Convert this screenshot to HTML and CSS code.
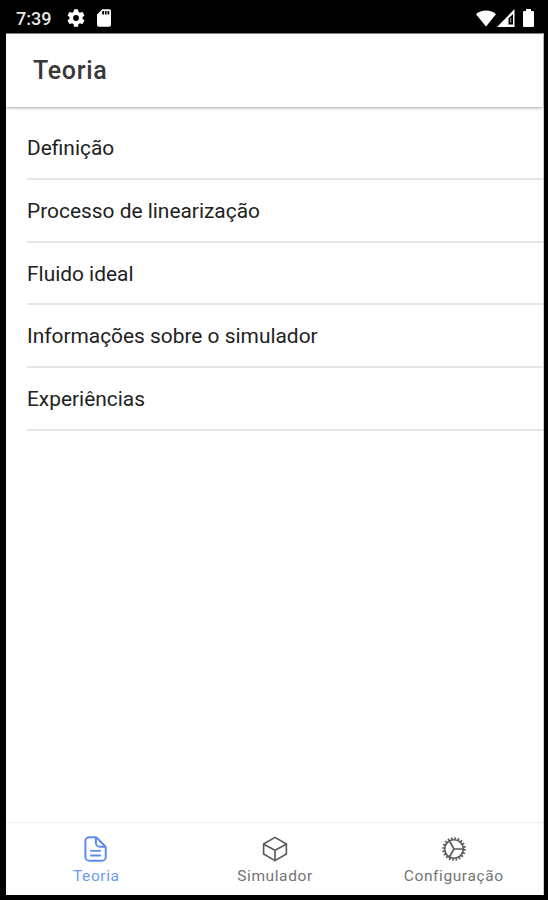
FILE: index.html
```html
<!DOCTYPE html>
<html lang="pt">
	<head>
		<meta charset="UTF-8">
		<meta name="viewport" content="width=device-width, initial-scale=1.0">
		<title>Teoria</title>
		<link rel="stylesheet" href="styles.css">
	</head>
	<body>
		<div class="status">
			<span class="time">7:39</span>
			<svg class="gear" viewBox="2 2 20 20" width="18" height="18"><path fill="#fff" d="M19.14 12.94c.04-.3.06-.61.06-.94s-.02-.64-.07-.94l2.03-1.58a.49.49 0 0 0 .12-.61l-1.92-3.32a.49.49 0 0 0-.59-.22l-2.39.96a7 7 0 0 0-1.62-.94l-.36-2.54a.48.48 0 0 0-.48-.41h-3.84a.48.48 0 0 0-.47.41l-.36 2.54c-.59.24-1.13.57-1.62.94l-2.39-.96a.48.48 0 0 0-.59.22L2.74 8.87a.47.47 0 0 0 .12.61l2.03 1.58c-.05.3-.09.63-.09.94s.02.64.07.94l-2.03 1.58a.49.49 0 0 0-.12.61l1.92 3.32c.12.22.37.29.59.22l2.39-.96c.5.38 1.03.7 1.62.94l.36 2.54c.05.24.24.41.48.41h3.84c.24 0 .44-.17.47-.41l.36-2.54a7 7 0 0 0 1.62-.94l2.39.96c.22.08.47 0 .59-.22l1.92-3.32a.47.47 0 0 0-.12-.61zM12 15.2a3.2 3.2 0 1 1 0-6.4 3.2 3.2 0 0 1 0 6.4z"/></svg>
			<svg class="card" viewBox="4 2 16 20" width="14" height="18"><path fill="#fff" d="M18 2h-8L4.02 8 4 20a2 2 0 0 0 2 2h12a2 2 0 0 0 2-2V4a2 2 0 0 0-2-2zm-6 6h-2V4h2zm3 0h-2V4h2zm3 0h-2V4h2z"/></svg>
			<div class="signals">
				<svg width="20" height="17" viewBox="0 0 20 17"><path fill="#fff" d="M0 4.2Q4 .5 10 .5t10 3.7L10 16.5z"/></svg>
				<svg width="18" height="18" viewBox="0 0 18 18"><path fill="#fff" d="M17.5 0v18H0z"/><path d="M16 5v10.5h-4.5V9.500z"/><path fill="#bbb" d="M13.300 9h.900v4.500h-.900z"/></svg>
				<svg width="11" height="18" viewBox="0 0 11 18"><path fill="#fff" d="M3 0h5v2h2q1 0 1 1v14q0 1-1 1H1q-1 0-1-1V3q0-1 1-1h2z"/></svg>
			</div>
		</div>
		<div class="screen">
			<header class="toolbar">
				<h1>Teoria</h1>
			</header>
			<ul class="list">
				<li>Definição</li>
				<li>Processo de linearização</li>
				<li>Fluido ideal</li>
				<li>Informações sobre o simulador</li>
				<li>Experiências</li>
			</ul>
			<nav class="tabs">
				<a class="tab active">
					<svg viewBox="0 0 512 512"><path d="M434 235V400a72 72 0 0 1-72 72H134a72 72 0 0 1-72-72V112a72 72 0 0 1 72-72h105a50 50 0 0 1 35 15l145 145a50 50 0 0 1 15 35z"/><path d="M254 50v90a75 75 0 0 0 75 75h95M164 290h168M164 375h168"/></svg>
					<span>Teoria</span>
				</a>
				<a class="tab">
					<svg viewBox="0 0 512 512"><path d="M464 346V166L256 44 48 166v180l208 122z"/><path d="M50 168l206 110 206-110M256 464V278"/></svg>
					<span>Simulador</span>
				</a>
				<a class="tab">
					<svg viewBox="0 0 512 512"><circle cx="256" cy="256" r="170"/><circle class="teeth" cx="256" cy="256" r="194" pathLength="180"/><path d="M256 256h174M256 256l-87-151M256 256l-87 151"/></svg>
					<span>Configuração</span>
				</a>
			</nav>
		</div>
	</body>
</html>
```

FILE: styles.css
```css
* {
	margin: 0;
	padding: 0;
	box-sizing: border-box;
}

body {
	height: 900px;
	background-color: #000;
	font-family: Roboto, sans-serif;
	color: #222;
	overflow: hidden;
}

.status {
	height: 33px;
	padding: 3px 14px 0 16px;
	display: flex;
	align-items: center;
	color: #e6e6e6;
}

.time {
	width: 51px;
	font-size: 18px;
	font-weight: 500;
}

.card {
	margin-left: 12px;
}

.signals {
	margin-left: auto;
	display: flex;
	align-items: center;
}

.signals svg:nth-child(2) {
	margin: 0 8px 0 1px;
}

.screen {
	height: 862px;
	margin: 0 4px 0 6px;
	background-color: #fff;
	border-top: 1px solid #888;
	border-right: 1px solid #ccc;
	display: flex;
	flex-direction: column;
}

.toolbar {
	height: 73px;
	padding: 0 0 0 27px;
	display: flex;
	align-items: center;
	box-shadow: 0 1px 3px rgba(0, 0, 0, 0.35);
}

.toolbar h1 {
	font-size: 25px;
	font-weight: 500;
	letter-spacing: 0.7px;
	color: #383838;
}

.list {
	list-style: none;
	padding: 10.4px 0 0 21px;
	flex: 1;
}

.list li {
	height: 62.7px;
	line-height: 63px;
	font-size: 20.9px;
	border-bottom: 2px solid #e6e6e6;
}

.tabs {
	height: 73px;
	padding-left: 1px;
	border-top: 1px solid #eee;
	display: flex;
}

.tab {
	flex: 1;
	padding-top: 12px;
	display: flex;
	flex-direction: column;
	align-items: center;
	font-size: 15.5px;
	line-height: 18px;
	letter-spacing: 0.6px;
	color: #747474;
}

.tab svg {
	width: 28px;
	height: 28px;
	margin-bottom: 4px;
	fill: none;
	stroke: #5a5a5a;
	stroke-width: 30;
	stroke-linejoin: round;
	stroke-linecap: round;
}

.tab .teeth {
	stroke-linecap: butt;
	stroke-width: 44;
	stroke-dasharray: 4.5 4.5;
}

.active {
	color: #6d99f2;
}

.active svg {
	stroke: #5b8bef;
	stroke-width: 36;
}
```
